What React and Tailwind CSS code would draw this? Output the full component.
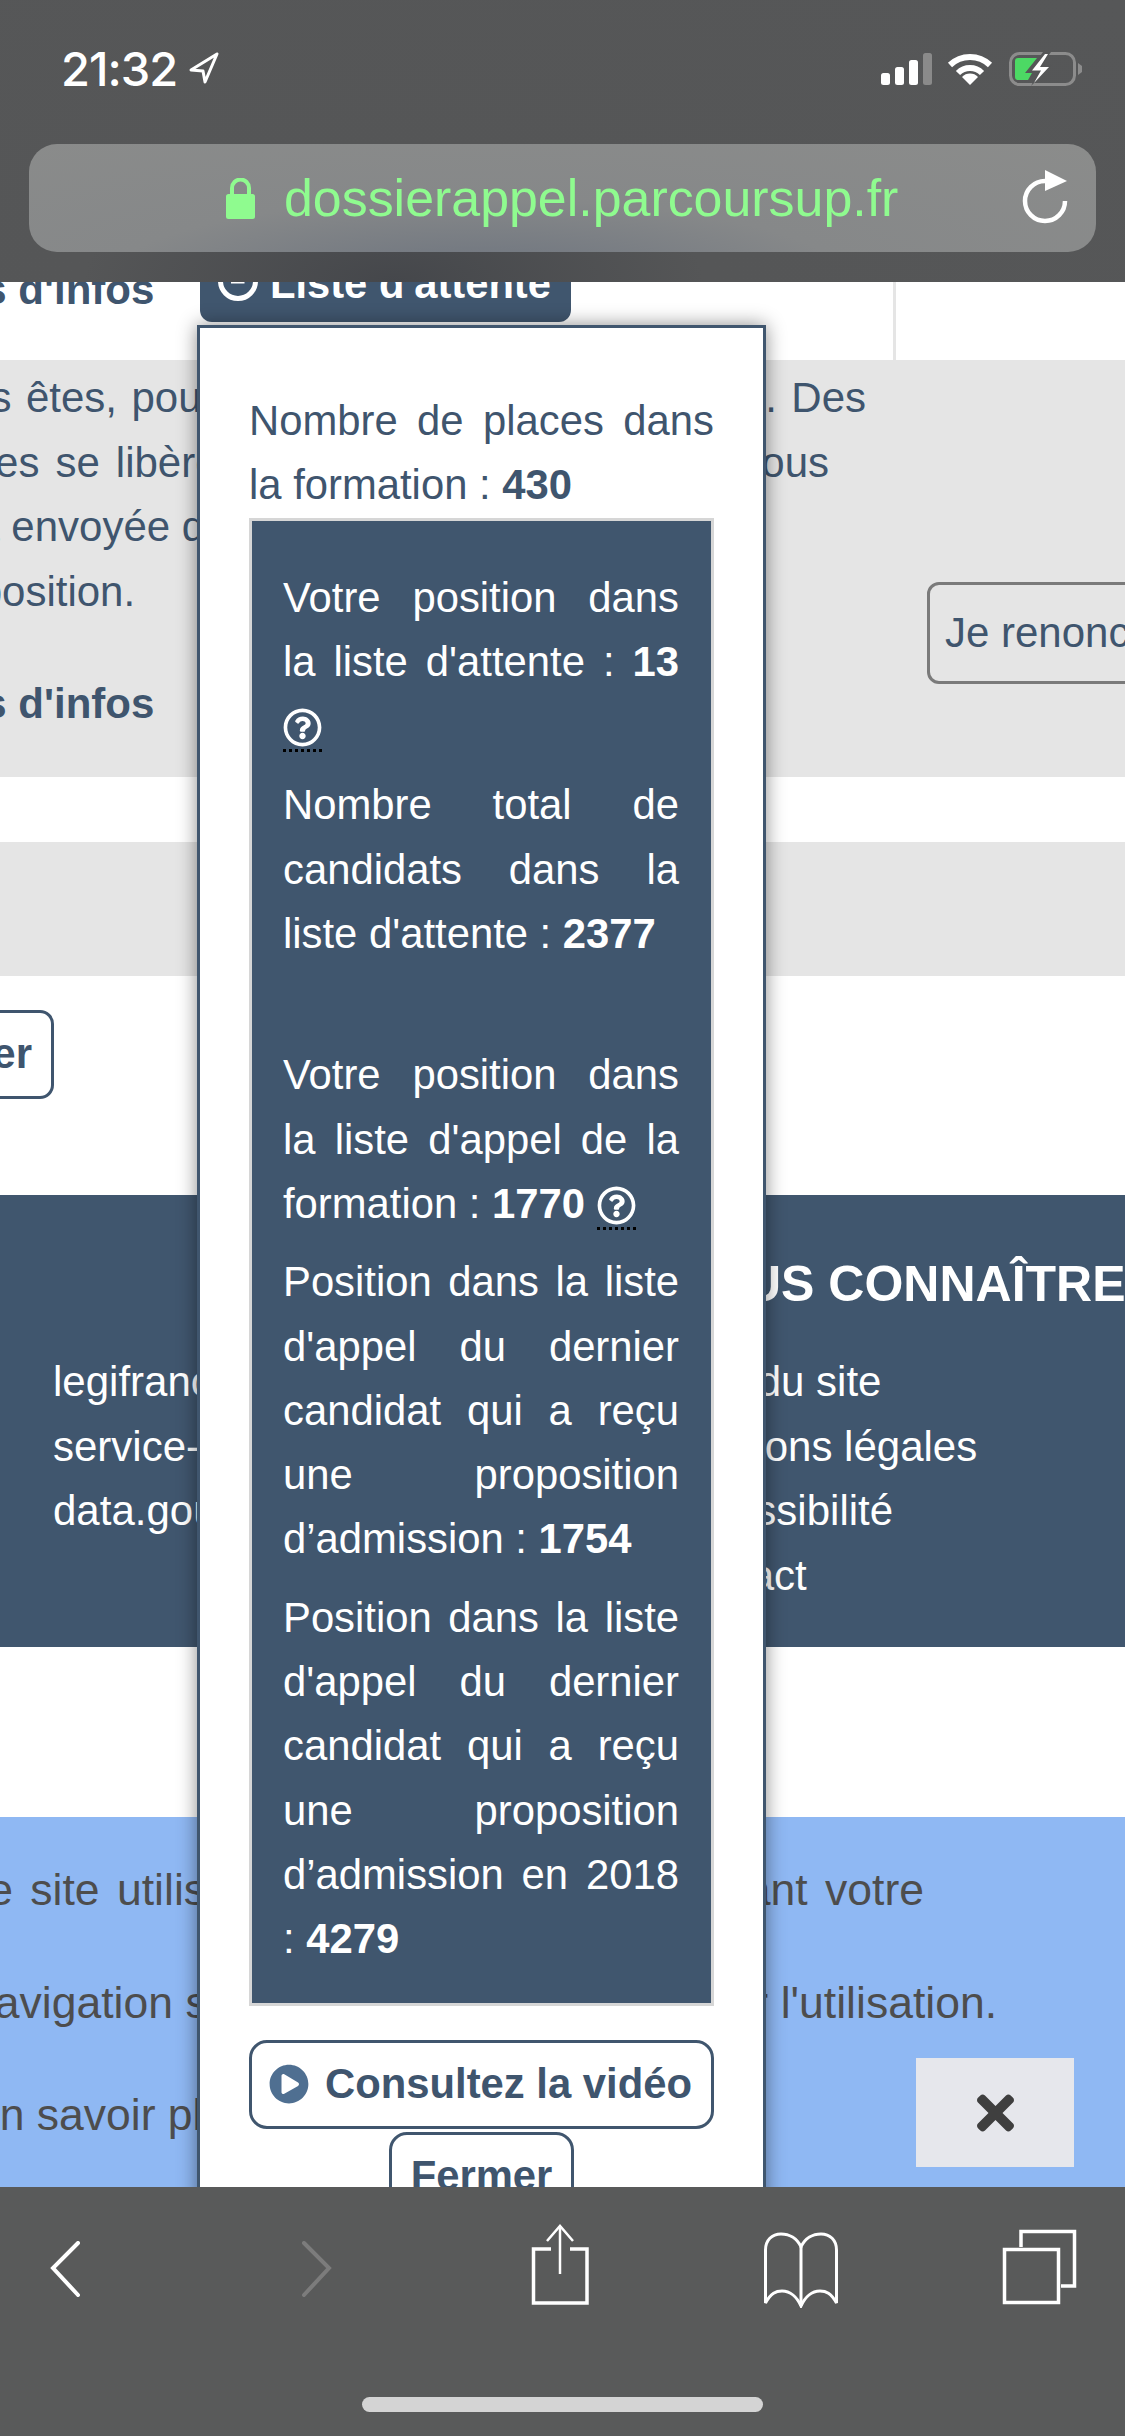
import React from "react";
import { FaRegQuestionCircle, FaPlayCircle, FaTimes } from "react-icons/fa";

// Dotted underlined help icon used in the dark box
function Help() {
  return (
    <span className="inline-block align-[-12px] border-b-[3px] border-dotted border-black h-[44px] w-[39px] leading-none">
      <FaRegQuestionCircle className="w-[39px] h-[39px] text-white" />
    </span>
  );
}

function StatusBar() {
  return (
    <div className="flex items-start h-[144px] pl-[61px]">
      <span className="mt-[45px] text-[47px] leading-[48px] font-medium text-white [font-family:Inter,sans-serif] tracking-[-1px]">21:32</span>
      <svg className="mt-[51px] ml-[11px]" width="32" height="34" viewBox="0 0 32 34" fill="none" stroke="white" strokeWidth="3" strokeLinejoin="round">
        <path d="M29 3 L3 19 L15 20 L17 31 Z" />
      </svg>
      <svg className="mt-[53px] ml-auto" width="51" height="32" viewBox="0 0 51 32">
        <rect x="0" y="20" width="9" height="12" rx="2.5" fill="white" />
        <rect x="14" y="14" width="9" height="18" rx="2.5" fill="white" />
        <rect x="28" y="7" width="9" height="25" rx="2.5" fill="white" />
        <rect x="42" y="0" width="9" height="32" rx="2.5" fill="#8a8a8a" />
      </svg>
      <svg className="mt-[52px] ml-[15px]" width="46" height="34" viewBox="0 0 46 34" fill="none" stroke="white" strokeWidth="6">
        <path d="M3 13 A29 29 0 0 1 43 13" />
        <path d="M11 21 A17 17 0 0 1 35 21" />
        <path d="M23 33 L15 25 A11 11 0 0 1 31 25 Z" fill="white" stroke="none" />
      </svg>
      <svg className="mt-[51px] ml-[16px] mr-[41px]" width="75" height="36" viewBox="0 0 75 36" fill="none">
        <rect x="1.5" y="2.5" width="64" height="31" rx="9" stroke="#8c8c8c" strokeWidth="3" />
        <path d="M69 12 L73 15 V21 L69 24 Z" fill="#8c8c8c" />
        <path d="M9 7 H28 L16 22 H23 L19 29 H9 Q6 29 6 26 V10 Q6 7 9 7 Z" fill="#4cd964" />
        <path d="M34 1 L20 21 H29 L22 35 L43 14 H33 L42 1 Z" fill="#555657" />
        <path d="M36 3 L23 19.5 H32 L25 32 L40 16 H31 L39 3 Z" fill="white" />
      </svg>
    </div>
  );
}

function UrlBar() {
  return (
    <div className="mx-[29px] h-[108px] rounded-[28px] flex items-center bg-[radial-gradient(ellipse_at_42%_125%,#6c737e_0%,#868889_42%,#8b8c8b_100%)]">
      <svg className="ml-[197px]" width="29" height="41" viewBox="0 0 29 41">
        <path d="M6 17 V10 A8.5 8.5 0 0 1 23 10 V17" fill="none" stroke="#8ffb8f" strokeWidth="4" />
        <rect x="0" y="16" width="29" height="25" rx="2.5" fill="#8ffb8f" />
      </svg>
      <span className="ml-[29px] text-[51.9px] leading-[60px] text-[#8ffb8f]">dossierappel.parcoursup.fr</span>
      <svg className="ml-auto mr-[25px] mt-[-2px]" width="50" height="54" viewBox="0 0 50 54" fill="none">
        <path d="M24 11 A20 20 0 1 0 44 31" stroke="white" strokeWidth="4.5" />
        <path d="M24 0 L46 11 L24 21 Z" fill="white" />
      </svg>
    </div>
  );
}

function BottomBar() {
  return (
    <div className="relative z-10 h-[249px] bg-[#595a5a] flex flex-col">
      <div className="h-[210px] flex items-start">
        <svg className="mt-[54px] ml-[50px]" width="32" height="56" viewBox="0 0 32 56" fill="none" stroke="white" strokeWidth="4" strokeLinecap="round">
          <path d="M28 2 L3 27 L28 54" />
        </svg>
        <svg className="mt-[54px] ml-[219px]" width="32" height="56" viewBox="0 0 32 56" fill="none" stroke="#7c7c7c" strokeWidth="4" strokeLinecap="round">
          <path d="M3 2 L28 27 L3 54" />
        </svg>
        <svg className="mt-[37px] ml-[197px]" width="60" height="82" viewBox="0 0 60 82" fill="none" stroke="white" strokeWidth="3.5">
          <path d="M21 25 H3.5 V79 H57 V25 H40" />
          <path d="M30 2 V50" strokeWidth="2.5" />
          <path d="M17 17 L30 2 L43 17" strokeWidth="2.5" />
        </svg>
        <svg className="mt-[45px] ml-[172px]" width="78" height="76" viewBox="0 0 78 76" fill="none" stroke="white" strokeWidth="3">
          <path d="M39 15 C35 6 27 2 19 2 C10 2 3.5 8 3.5 18 V71 C9 61 14 59 20 59 C28 59 35 65 39 74 C43 65 50 59 58 59 C64 59 69 61 74.5 71 V18 C74.5 8 68 2 59 2 C51 2 43 6 39 15 Z" />
          <path d="M39 15 V74" />
        </svg>
        <svg className="mt-[41px] ml-[161px]" width="78" height="78" viewBox="0 0 78 78" fill="none" stroke="white" strokeWidth="3.5">
          <rect x="3.5" y="21.5" width="54" height="53" />
          <path d="M20 19 V3.5 H73.5 V58 H60" />
        </svg>
      </div>
      <div className="ml-[362px] w-[401px] h-[15px] rounded-full bg-[#d4d4d4]" />
    </div>
  );
}

// Page that sits behind the popup, scrolled a little to the right
function PageContent() {
  return (
    <div className="h-[1905px] overflow-hidden text-[42px] leading-[64.6px] text-[#3f556e]">
      <div className="flex h-[78px] w-[896px] border-r-[3px] border-[#e5e5e5]">
        <span className="ml-[-82px] mt-[-24px] w-[282px] font-bold whitespace-nowrap shrink-0">Plus d'infos</span>
        <div className="mt-[-30px] h-[70px] w-[371px] rounded-b-[12px] bg-[#40566e] flex items-center pb-[6px] text-white font-bold shrink-0">
          <svg className="ml-[17px] mt-[-6px]" width="42" height="42" viewBox="0 0 42 42" fill="none" stroke="white" strokeWidth="5">
            <circle cx="21" cy="21" r="17.5" />
            <path d="M14 21 H25 V9" />
          </svg>
          <span className="ml-[11px] text-[41.7px] leading-[50px] whitespace-nowrap">Liste d'attente</span>
        </div>
      </div>

      <div className="flex h-[417px] bg-[#e5e5e5] ml-[-82px] pt-[6px]">
        <div className="w-[1009px] shrink-0">
          <p className="w-[948px] [text-align-last:justify]">Vous êtes, pour le moment, en liste d'attente. Des</p>
          <p className="w-[911px] [text-align-last:justify]">places se libèrent ensuite, une proposition vous</p>
          <p className="whitespace-nowrap">sera envoyée dès qu'une place sera libre</p>
          <p className="whitespace-nowrap">proposition.</p>
          <p className="mt-[48px] font-bold whitespace-nowrap">Plus d'infos</p>
        </div>
        <div className="mt-[216px] h-[102px] w-[400px] shrink-0 rounded-[12px] border-[3px] border-[#7a7a7a] pl-[15px] flex items-center whitespace-nowrap">
          Je renonce
        </div>
      </div>

      <div className="mt-[65px] h-[134px] bg-[#e5e5e5]" />

      <div className="h-[219px] pt-[34px]">
        <div className="ml-[-100px] w-[154px] h-[89px] rounded-[14px] border-[3px] border-[#3f556e] flex items-center justify-end pr-[19px] font-bold">
          Confirmer
        </div>
      </div>

      <div className="flex h-[452px] bg-[#40566e] text-white pl-[53px]">
        <div className="w-[609px] pt-[155px] shrink-0">
          <p>legifrance.gouv.fr</p>
          <p>service-public.fr</p>
          <p>data.gouv.fr</p>
        </div>
        <div className="shrink-0 whitespace-nowrap">
          <p className="pt-[55px] ml-[8px] h-[155px] text-[50px] leading-[68px] font-bold">NOUS CONNAÎTRE</p>
          <p>Plan du site</p>
          <p>Mentions légales</p>
          <p>Accessibilité</p>
          <p>Contact</p>
        </div>
      </div>

      <div className="mt-[170px] relative h-[370px] bg-[#8fb8f3] text-[44.5px] text-[#4d4d4d] ml-[-30px] pt-[41px]">
        <p className="ml-[-14px] w-[968px] [text-align-last:justify]">Ce site utilise des cookies en enregistrant votre</p>
        <p className="mt-[48px] w-[1027px] [text-align-last:justify]">navigation sur notre site et à en mesurer l'utilisation.</p>
        <p className="mt-[48px] whitespace-nowrap">En savoir plus sur les cookies</p>
        <div className="absolute left-[946px] top-[241px] w-[158px] h-[109px] bg-[#e6e7ec] flex items-center justify-center">
          <FaTimes className="w-[37px] h-[54px] text-[#3f3f3f]" />
        </div>
      </div>
    </div>
  );
}

function Popup() {
  return (
    <div className="absolute left-[197px] top-[325px] w-[569px] h-[1900px] bg-white border-[3px] border-[#40566e] shadow-[0_0_18px_rgba(0,0,0,0.45)] pl-[49px] pr-[49px] pt-[61px] text-[41.8px] leading-[64.3px] text-[#3f556e]">
      <p className="text-justify">Nombre de places dans la formation : <b>430</b></p>

      <div className="border-[3px] border-[#d6d6d6] bg-[#40566e] text-white pl-[31px] pr-[32px] pt-[45px] pb-[31px] text-justify">
        <p className="mb-[15px]">Votre position dans la liste d'attente : <b>13</b> <Help /></p>
        <p className="mb-[14px]">Nombre total de candidats dans la liste d'attente : <b>2377</b></p>
        <p className="h-[63px]" />
        <p className="mb-[14px]">Votre position dans la liste d'appel de la formation : <b>1770</b> <Help /></p>
        <p className="mb-[14px]">Position dans la liste d'appel du dernier candidat qui a reçu une proposition d’admission : <b>1754</b></p>
        <p>Position dans la liste d'appel du dernier candidat qui a reçu une proposition d’admission en 2018 : <b>4279</b></p>
      </div>

      <div className="mt-[34px] h-[89px] rounded-[18px] border-[3px] border-[#40566e] flex items-center pl-[17px] font-bold whitespace-nowrap">
        <FaPlayCircle className="w-[40px] h-[40px] text-[#4f6f91] shrink-0" />
        <span className="ml-[16px]">Consultez la vidéo</span>
      </div>
      <div className="mt-[3px] mx-auto w-[185px] h-[89px] rounded-[18px] border-[3px] border-[#40566e] flex items-center justify-center font-bold">
        Fermer
      </div>
    </div>
  );
}

export default function App() {
  return (
    <div className="relative w-[1125px] h-[2436px] overflow-hidden bg-white [font-family:'Liberation_Sans',Arial,sans-serif]">
      <div className="relative z-10 h-[282px] bg-[radial-gradient(ellipse_at_35%_100%,#45474b_0%,#555657_30%,#565758_100%)]">
        <StatusBar />
        <UrlBar />
      </div>
      <PageContent />
      <BottomBar />
      <Popup />
    </div>
  );
}
